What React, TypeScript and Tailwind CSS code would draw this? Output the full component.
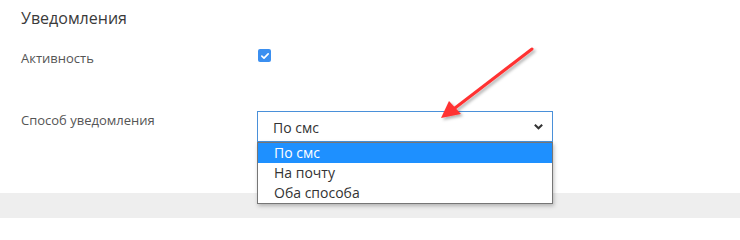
export default function App() {
  return (
    <div className="relative w-[740px] h-[218px] bg-white font-['Open_Sans',sans-serif] overflow-hidden">
      <div className="h-[193px] pl-[21px] pt-[6px]">
        <h2 className="text-[16px] leading-[24px] text-[#3a3a3a]">Уведомления</h2>

        {/* Активность */}
        <div className="flex items-center mt-[20px] h-[16px]">
          <div className="w-[237px] text-[13px] leading-[16px] text-[#555]">Активность</div>
          <span className="flex items-center justify-center w-[13px] h-[13px] rounded-[2px] bg-[#3b8ff0] -mt-[5px]">
            <svg viewBox="0 0 12 12" className="w-[10px] h-[10px]">
              <path d="M2.2 6.2 L4.8 8.6 L9.8 3.4" fill="none" stroke="white" strokeWidth="2" strokeLinecap="round" strokeLinejoin="round" />
            </svg>
          </span>
        </div>

        {/* Способ уведомления */}
        <div className="flex items-start mt-[45px]">
          <div className="w-[236px] pt-[1px] text-[13px] leading-[16px] text-[#555]">Способ уведомления</div>
          <div className="relative w-[296px]">
            <div className="flex items-center justify-between h-[31px] border border-[#4a90d9] bg-white pl-[15px] pr-[8px] text-[14px] text-[#333]">
              <span className="mt-[2px]">По смс</span>
              <svg viewBox="0 0 12 12" className="w-[11px] h-[11px]">
                <path d="M2 4 L6 8 L10 4" fill="none" stroke="#333" strokeWidth="2.2" />
              </svg>
            </div>
            {/* dropdown list */}
            <div className="absolute left-0 top-[31px] w-[296px] z-10 bg-white border border-[#767676] shadow-[1px_2px_4px_rgba(0,0,0,0.25)] text-[14px] leading-[20px] text-[#333]">
              <div className="pl-[16px] bg-[#1e90ff] text-white">По смс</div>
              <div className="pl-[16px]">На почту</div>
              <div className="pl-[16px]">Оба способа</div>
            </div>
          </div>
        </div>
      </div>
      <div className="h-[25px] bg-[#eeeeee]" />

      {/* red annotation arrow */}
      <svg className="absolute left-0 top-0 pointer-events-none" width="740" height="218" viewBox="0 0 740 218">
        <defs>
          <filter id="sh" x="-20%" y="-20%" width="140%" height="140%">
            <feDropShadow dx="2" dy="2" stdDeviation="1.5" floodColor="#000" floodOpacity="0.3" />
          </filter>
        </defs>
        <g filter="url(#sh)">
          <line x1="532" y1="49" x2="455" y2="108" stroke="#ff3333" strokeWidth="3" strokeLinecap="round" />
          <polygon points="441,118 449,101 461,114" fill="#ff3333" />
        </g>
      </svg>
    </div>
  );
}
